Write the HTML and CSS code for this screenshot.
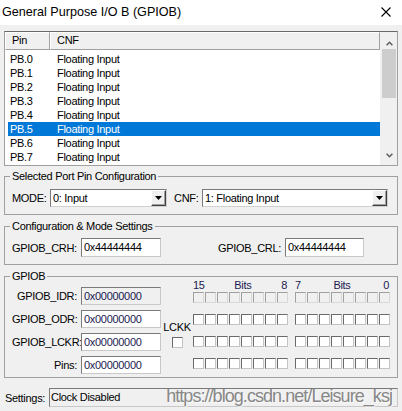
FILE: index.html
```html
<!DOCTYPE html>
<html>
<head>
<meta charset="utf-8">
<link rel="stylesheet" href="styles.css">
</head>
<body>
<div class="titlebar">
  <span class="title">General Purpose I/O B (GPIOB)</span>
  <svg class="close" width="10" height="10" viewBox="0 0 10 10"><path d="M0.5 0.5 L9.5 9.5 M9.5 0.5 L0.5 9.5" stroke="#000" stroke-width="1.1" fill="none"/></svg>
</div>

<div class="list">
  <div class="list-main">
    <div class="list-head">
      <div class="hcell h-pin">Pin</div>
      <div class="hcell h-cnf">CNF</div>
    </div>
    <div class="rows">
      <div class="row"><span class="c-pin">PB.0</span><span>Floating Input</span></div>
      <div class="row"><span class="c-pin">PB.1</span><span>Floating Input</span></div>
      <div class="row"><span class="c-pin">PB.2</span><span>Floating Input</span></div>
      <div class="row"><span class="c-pin">PB.3</span><span>Floating Input</span></div>
      <div class="row"><span class="c-pin">PB.4</span><span>Floating Input</span></div>
      <div class="row sel"><span class="c-pin">PB.5</span><span>Floating Input</span></div>
      <div class="row"><span class="c-pin">PB.6</span><span>Floating Input</span></div>
      <div class="row"><span class="c-pin">PB.7</span><span>Floating Input</span></div>
    </div>
  </div>
  <div class="vscroll">
    <div class="arrow up"><svg width="7" height="5" viewBox="0 0 7 5"><polyline points="0.6,4.3 3.5,1.3 6.4,4.3" stroke="#606060" stroke-width="1.6" fill="none"/></svg></div>
    <div class="track"><div class="thumb"></div></div>
    <div class="arrow down"><svg width="7" height="5" viewBox="0 0 7 5"><polyline points="0.6,0.7 3.5,3.7 6.4,0.7" stroke="#606060" stroke-width="1.6" fill="none"/></svg></div>
  </div>
</div>

<fieldset class="group g1">
  <legend>Selected Port Pin Configuration</legend>
  <div class="g1-row">
    <span class="lbl mode-lbl">MODE:</span>
    <div class="combo combo-mode"><span class="combo-text">0: Input</span><span class="combo-btn"><svg width="7" height="4" viewBox="0 0 7 4"><polygon points="0,0 7,0 3.5,4" fill="#000"/></svg></span></div>
    <span class="lbl cnf-lbl">CNF:</span>
    <div class="combo combo-cnf"><span class="combo-text">1: Floating Input</span><span class="combo-btn"><svg width="7" height="4" viewBox="0 0 7 4"><polygon points="0,0 7,0 3.5,4" fill="#000"/></svg></span></div>
  </div>
</fieldset>

<fieldset class="group g2">
  <legend>Configuration &amp; Mode Settings</legend>
  <div class="g2-row">
    <span class="lbl crh-lbl">GPIOB_CRH:</span>
    <span class="edit e-crh">0x44444444</span>
    <span class="lbl crl-lbl">GPIOB_CRL:</span>
    <span class="edit e-crl">0x44444444</span>
  </div>
</fieldset>

<fieldset class="group g3">
  <legend>GPIOB</legend>
  <div class="g3-row">
    <div class="regs">
      <span class="rlbl">GPIOB_IDR:</span><span class="edit ro val">0x00000000</span>
      <span class="rlbl">GPIOB_ODR:</span><span class="edit val">0x00000000</span>
      <span class="rlbl">GPIOB_LCKR:</span><span class="edit val">0x00000000</span>
      <span class="rlbl">Pins:</span><span class="edit val">0x00000000</span>
    </div>
    <div class="lckk">
      <span class="lckk-lbl">LCKK</span>
      <span class="cb"></span>
    </div>
    <div class="bits">
      <div class="bits-head">
        <div class="bh"><span>15</span><span>Bits</span><span>8</span></div>
        <div class="bh"><span>7</span><span>Bits</span><span>0</span></div>
      </div>
      <div class="bits-row dis">
        <div class="cbg"><span class="cb"></span><span class="cb"></span><span class="cb"></span><span class="cb"></span><span class="cb"></span><span class="cb"></span><span class="cb"></span><span class="cb"></span></div>
        <div class="cbg"><span class="cb"></span><span class="cb"></span><span class="cb"></span><span class="cb"></span><span class="cb"></span><span class="cb"></span><span class="cb"></span><span class="cb"></span></div>
      </div>
      <div class="bits-row">
        <div class="cbg"><span class="cb"></span><span class="cb"></span><span class="cb"></span><span class="cb"></span><span class="cb"></span><span class="cb"></span><span class="cb"></span><span class="cb"></span></div>
        <div class="cbg"><span class="cb"></span><span class="cb"></span><span class="cb"></span><span class="cb"></span><span class="cb"></span><span class="cb"></span><span class="cb"></span><span class="cb"></span></div>
      </div>
      <div class="bits-row">
        <div class="cbg"><span class="cb"></span><span class="cb"></span><span class="cb"></span><span class="cb"></span><span class="cb"></span><span class="cb"></span><span class="cb"></span><span class="cb"></span></div>
        <div class="cbg"><span class="cb"></span><span class="cb"></span><span class="cb"></span><span class="cb"></span><span class="cb"></span><span class="cb"></span><span class="cb"></span><span class="cb"></span></div>
      </div>
      <div class="bits-row">
        <div class="cbg"><span class="cb"></span><span class="cb"></span><span class="cb"></span><span class="cb"></span><span class="cb"></span><span class="cb"></span><span class="cb"></span><span class="cb"></span></div>
        <div class="cbg"><span class="cb"></span><span class="cb"></span><span class="cb"></span><span class="cb"></span><span class="cb"></span><span class="cb"></span><span class="cb"></span><span class="cb"></span></div>
      </div>
    </div>
  </div>
</fieldset>

<div class="settings">
  <span class="lbl set-lbl">Settings:</span>
  <span class="edit ro e-set">Clock Disabled</span>
  <span class="watermark">https://blog.csdn.net/Leisure_ksj</span>
</div>
</body>
</html>
```

FILE: styles.css
```css
* { box-sizing: border-box; }

body {
  margin: 0;
  width: 402px;
  height: 411px;
  overflow: hidden;
  background: #f0f0f0;
  font-family: "Liberation Sans", Arial, sans-serif;
  font-size: 11px;
  letter-spacing: -0.3px;
  color: #000;
}

/* title bar */
.titlebar {
  height: 25px;
  background: #fff;
  display: flex;
  align-items: center;
  justify-content: space-between;
  padding: 0 11px 1px 2px;
}
.title {
  font-size: 12.6px;
  letter-spacing: 0;
}
.close { display: block; }

/* list view */
.list {
  margin: 6px 4px 0 4px;
  height: 135px;
  border: 1px solid #a0a0a0;
  border-top-color: #696969;
  background: #fff;
  display: flex;
}
.list-main { flex: 1; }
.list-head {
  display: flex;
  height: 18px;
}
.hcell {
  background: #f0f0f0;
  border: 1px solid;
  border-color: #fff #a0a0a0 #a0a0a0 #fff;
  line-height: 15px;
  padding-left: 6px;
}
.h-pin { width: 45px; }
.h-cnf { flex: 1; }
.rows { padding: 2px 0 0 3px; }
.row {
  display: flex;
  height: 14px;
  line-height: 14px;
  padding-left: 2px;
}
.c-pin { width: 47px; }
.row.sel {
  background: #0078d7;
  color: #fff;
}

.vscroll {
  width: 17px;
  background: #f0f0f0;
  display: flex;
  flex-direction: column;
}
.arrow {
  height: 17px;
  display: flex;
  justify-content: center;
}
.arrow svg { display: block; }
.arrow.up { align-items: flex-start; padding-top: 9px; padding-left: 1px; }
.arrow.down { align-items: flex-start; padding-top: 5px; padding-left: 1px; }
.track { flex: 1; }
.thumb {
  height: 49px;
  margin: 0 1px 0 2px;
  background: #cdcdcd;
}

/* group boxes */
.group {
  margin: 4px 4px 0 4px;
  border: 1px solid #a0a0a0;
  padding: 0 7px;
  min-width: 0;
}
.group legend {
  padding: 0 2px;
  margin-left: -2px;
  line-height: 13px;
}
.g1 { padding-top: 6px; padding-bottom: 7px; }
.g2 { margin-top: 5px; padding-top: 5px; padding-bottom: 7px; }
.g3 { margin-top: 5px; padding-top: 4px; padding-bottom: 3px; padding-right: 5px; }

.lbl { white-space: nowrap; }

.g1-row {
  display: flex;
  align-items: center;
  height: 18px;
}
.mode-lbl { width: 38px; }
.cnf-lbl { width: 28px; margin-left: 7px; }
.combo {
  display: flex;
  height: 18px;
  background: #fff;
  border: 1px solid;
  border-color: #7a7a7a #d0d0d0 #d0d0d0 #7a7a7a;
}
.combo-mode { width: 117px; }
.combo-cnf { width: 186px; }
.combo-text {
  flex: 1;
  padding-left: 2px;
  line-height: 16px;
  white-space: nowrap;
}
.combo-btn {
  width: 15px;
  background: #f0f0f0;
  border: 1px solid;
  border-color: #fff #404040 #404040 #fff;
  box-shadow: inset -1px -1px 0 #a0a0a0;
  display: flex;
  align-items: center;
  justify-content: center;
  padding-right: 1px;
}
.combo-btn svg { display: block; }

/* edits */
.edit {
  display: block;
  background: #fff;
  border: 1px solid;
  border-color: #7a7a7a #c8c8c8 #c8c8c8 #7a7a7a;
  padding-left: 2px;
  white-space: nowrap;
}
.edit.ro { background: #f0f0f0; }

.g2-row {
  display: flex;
  align-items: center;
  height: 19px;
}
.crh-lbl { width: 69px; }
.crl-lbl { width: 67px; margin-left: 57px; }
.e-crh { width: 80px; height: 19px; line-height: 17px; }
.e-crl { width: 79px; height: 19px; line-height: 17px; }

/* GPIOB register block */
.g3-row { display: flex; align-items: flex-start; }
.regs {
  display: grid;
  grid-template-columns: 65px 80px;
  grid-auto-rows: 18px;
  column-gap: 4px;
  row-gap: 5px;
}
.rlbl {
  text-align: right;
  line-height: 18px;
  white-space: nowrap;
}
.val { height: 18px; line-height: 16px; color: #1a1a50; }

.lckk {
  width: 28px;
  margin-left: 2px;
  margin-top: 34px;
  display: flex;
  flex-direction: column;
  align-items: center;
}
.lckk-lbl { line-height: 12px; }
.lckk .cb { margin-top: 4px; }

.cb {
  display: block;
  width: 11px;
  height: 11px;
  background: #fff;
  border: 1px solid;
  border-color: #6a6a6a #c4c4c4 #c4c4c4 #6a6a6a;
}

.bits {
  width: 198px;
  margin-left: 2px;
  margin-top: -8px;
  display: flex;
  flex-direction: column;
  gap: 11px;
}
.bits-head {
  display: flex;
  justify-content: space-between;
  line-height: 12px;
  height: 12px;
  margin-bottom: -10px;
  color: #1a1a50;
}
.bh {
  width: 96px;
  display: flex;
  justify-content: space-between;
  padding-right: 2px;
}
.bits-row {
  display: flex;
  justify-content: space-between;
}
.cbg {
  display: flex;
  gap: 1px;
  width: 96px;
}
.bits-row.dis .cb {
  background: #f0f0f0;
  border-color: #a0a0a0 #d8d8d8 #d8d8d8 #a0a0a0;
}

/* settings line */
.settings {
  position: relative;
  display: flex;
  align-items: center;
  height: 19px;
  margin-top: 10px;
  padding-left: 5px;
}
.set-lbl { width: 44px; }
.e-set {
  width: 349px;
  height: 19px;
  line-height: 17px;
  padding-left: 1px;
}
.watermark {
  position: absolute;
  right: 10px;
  top: -1.5px;
  font-size: 18px;
  line-height: 18px;
  letter-spacing: -0.95px;
  color: #878787;
  text-shadow: 1px 1px 0 rgba(255,255,255,0.7);
  white-space: nowrap;
}
```
